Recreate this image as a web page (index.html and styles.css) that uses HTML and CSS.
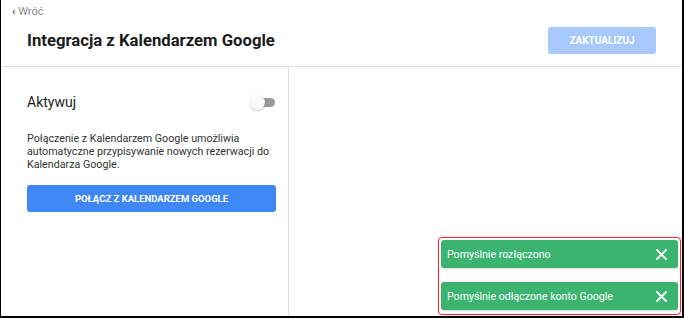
FILE: index.html
```html
<!DOCTYPE html>
<html lang="pl">
<head>
    <meta charset="UTF-8">
    <meta name="viewport" content="width=device-width, initial-scale=1.0">
    <title>Integracja z Kalendarzem Google</title>
    <link rel="stylesheet" href="styles.css">
</head>
<body>
    <div class="page">
        <div class="header">
            <a href="#" class="back-link"><span class="chevron">&#8249;</span> Wróć</a>
            <div class="title-row">
                <h1>Integracja z Kalendarzem Google</h1>
                <button class="update-btn" disabled>ZAKTUALIZUJ</button>
            </div>
        </div>

        <div class="content">
            <div class="settings">
                <div class="activate-row">
                    <span class="activate-label">Aktywuj</span>
                    <span class="switch"><span class="switch-knob"></span></span>
                </div>
                <p class="description">
                    Połączenie z Kalendarzem Google umożliwia automatyczne przypisywanie nowych rezerwacji do Kalendarza Google.
                </p>
                <button class="connect-btn">POŁĄCZ Z KALENDARZEM GOOGLE</button>
            </div>
            <div class="preview"></div>
        </div>

        <div class="toasts">
            <div class="toast">
                <span>Pomyślnie rozłączono</span>
                <svg class="toast-close" width="11" height="11" viewBox="0 0 11 11">
                    <path d="M1 1L10 10M10 1L1 10" stroke="#fff" stroke-width="1.8" stroke-linecap="round"/>
                </svg>
            </div>
            <div class="toast">
                <span>Pomyślnie odłączone konto Google</span>
                <svg class="toast-close" width="11" height="11" viewBox="0 0 11 11">
                    <path d="M1 1L10 10M10 1L1 10" stroke="#fff" stroke-width="1.8" stroke-linecap="round"/>
                </svg>
            </div>
        </div>
    </div>
</body>
</html>
```

FILE: styles.css
```css
* {
    box-sizing: border-box;
}
body {
    margin: 0;
    font-family: Roboto, "Liberation Sans", sans-serif;
    color: #222;
    background: #fff;
}
.page {
    position: relative;
    width: 684px;
    height: 318px;
    border-left: 1px solid #000;
    border-right: 2px solid #000;
    border-bottom: 2px solid #000;
    display: flex;
    flex-direction: column;
    overflow: hidden;
}
.header {
    height: 67px;
    border-bottom: 1px solid #dedee6;
    padding: 5px 26px 0 11px;
}
.back-link {
    display: block;
    font-size: 11px;
    line-height: 14px;
    color: #8a8a8a;
    text-decoration: none;
}
.chevron {
    font-weight: 700;
    color: #555;
}
.title-row {
    display: flex;
    align-items: center;
    justify-content: space-between;
    margin-top: 8px;
    padding-left: 15px;
    height: 27px;
}
h1 {
    margin: 0;
    font-size: 16.7px;
    font-weight: 700;
    color: #1b1b1b;
}
.update-btn {
    width: 108px;
    height: 27px;
    border: none;
    border-radius: 3px;
    background: #a8c9fd;
    color: #fff;
    font-family: Roboto, "Liberation Sans", sans-serif;
    font-size: 10px;
    font-weight: 700;
}
.content {
    flex: 1;
    display: flex;
}
.settings {
    width: 288px;
    border-right: 1px solid #dedee6;
    padding: 26px 13px 0 26px;
}
.activate-row {
    display: flex;
    align-items: center;
    justify-content: space-between;
    height: 18px;
}
.activate-label {
    font-size: 14px;
    color: #1b1b1b;
}
.switch {
    position: relative;
    width: 24px;
    height: 9px;
    border-radius: 5px;
    background: #9a9a9a;
}
.switch-knob {
    position: absolute;
    left: -1px;
    top: -3px;
    width: 15px;
    height: 15px;
    border-radius: 50%;
    background: #fafafa;
    box-shadow: 0 1px 2px rgba(0,0,0,0.25);
}
.description {
    margin: 21px 0 0;
    font-size: 10.7px;
    line-height: 13px;
    color: #333;
}
.connect-btn {
    display: block;
    width: 249px;
    height: 27px;
    margin-top: 14px;
    border: none;
    border-radius: 3px;
    background: #3f87f5;
    color: #fff;
    font-family: Roboto, "Liberation Sans", sans-serif;
    font-size: 9.5px;
    font-weight: 700;
}
.preview {
    flex: 1;
}
.toasts {
    position: absolute;
    right: 1px;
    bottom: 1px;
    width: 243px;
    padding: 2px 2px 4px;
    border: 1px solid #e8303a;
    border-radius: 4px;
    box-shadow: 0 0 2px rgba(232,48,58,0.35);
    display: flex;
    flex-direction: column;
    gap: 14px;
}
.toast {
    display: flex;
    align-items: center;
    justify-content: space-between;
    height: 28px;
    padding: 0 11px 0 6px;
    border-radius: 3px;
    background: #3bb470;
    color: #fff;
    font-size: 10.6px;
    box-shadow: 0 1px 2px rgba(0,0,0,0.15);
}
```
